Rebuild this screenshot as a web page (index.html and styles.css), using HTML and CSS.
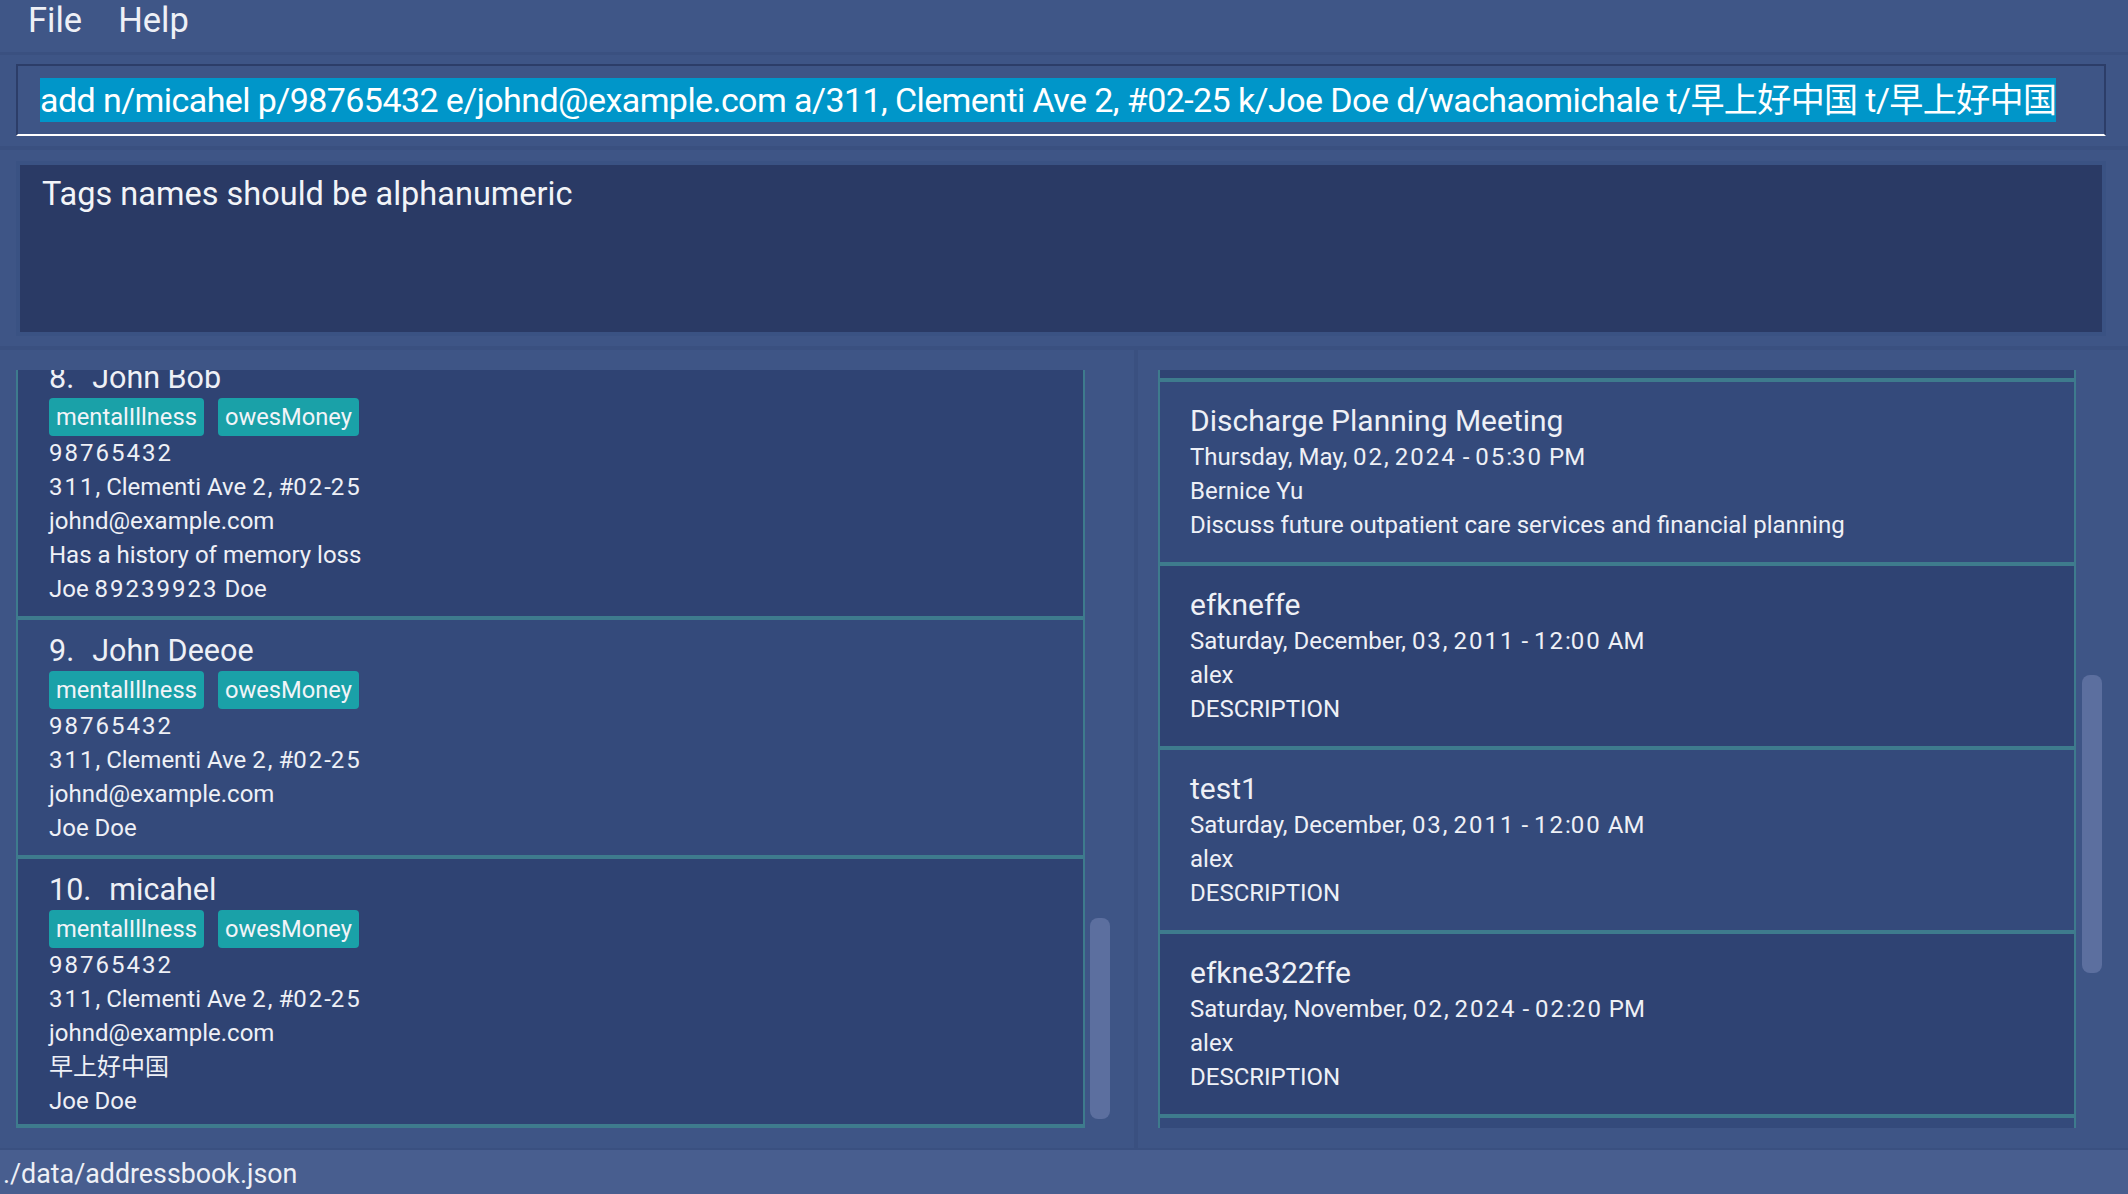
FILE: index.html
```html
<!DOCTYPE html>
<html lang="en">
<head>
<meta charset="utf-8">
<title>AddressBook</title>
<link rel="stylesheet" href="styles.css">
</head>
<body>
<div class="app">
  <div class="menubar">
    <span class="menu-item">File</span>
    <span class="menu-item">Help</span>
  </div>

  <div class="command-pane">
    <div class="command-box">
      <span class="command-text">add n/micahel p/98765432 e/johnd@example.com a/311, Clementi Ave 2, #02-25 k/Joe Doe d/wachaomichale t/早上好中国 t/早上好中国</span>
    </div>
  </div>

  <div class="result-pane">
    <div class="result-box">Tags names should be alphanumeric</div>
  </div>

  <div class="main">
    <div class="panel panel-left">
      <div class="viewport viewport-left">
        <div class="list" style="margin-top:-23px">
          <div class="person odd">
            <div class="name"><span class="idx">8.</span>John Bob</div>
            <div class="tags"><span class="tag">mentalIllness</span><span class="tag">owesMoney</span></div>
            <div class="line"><span class="num">98765432</span></div>
            <div class="line"><span class="num">311</span>, Clementi Ave <span class="num">2</span>, #<span class="num">02</span>-<span class="num">25</span></div>
            <div class="line">johnd@example.com</div>
            <div class="line">Has a history of memory loss</div>
            <div class="line">Joe <span class="num">89239923</span> Doe</div>
          </div>
          <div class="person even">
            <div class="name"><span class="idx">9.</span>John Deeoe</div>
            <div class="tags"><span class="tag">mentalIllness</span><span class="tag">owesMoney</span></div>
            <div class="line"><span class="num">98765432</span></div>
            <div class="line"><span class="num">311</span>, Clementi Ave <span class="num">2</span>, #<span class="num">02</span>-<span class="num">25</span></div>
            <div class="line">johnd@example.com</div>
            <div class="line">Joe Doe</div>
          </div>
          <div class="person odd last">
            <div class="name"><span class="idx">10.</span>micahel</div>
            <div class="tags"><span class="tag">mentalIllness</span><span class="tag">owesMoney</span></div>
            <div class="line"><span class="num">98765432</span></div>
            <div class="line"><span class="num">311</span>, Clementi Ave <span class="num">2</span>, #<span class="num">02</span>-<span class="num">25</span></div>
            <div class="line">johnd@example.com</div>
            <div class="line">早上好中国</div>
            <div class="line">Joe Doe</div>
          </div>
        </div>
      </div>
      <div class="track track-left">
        <div class="thumb" style="margin-top:548px;height:201px"></div>
      </div>
    </div>

    <div class="divider"></div>

    <div class="panel panel-right">
      <div class="viewport viewport-right">
        <div class="list" style="margin-top:-172px">
          <div class="event odd">
            <div class="title">&nbsp;</div>
            <div class="line">&nbsp;</div>
            <div class="line">&nbsp;</div>
            <div class="line">&nbsp;</div>
          </div>
          <div class="event even">
            <div class="title">Discharge Planning Meeting</div>
            <div class="line">Thursday, May, <span class="num">02</span>, <span class="num">2024</span> - <span class="num">05</span>:<span class="num">30</span> PM</div>
            <div class="line">Bernice Yu</div>
            <div class="line">Discuss future outpatient care services and financial planning</div>
          </div>
          <div class="event odd">
            <div class="title">efkneffe</div>
            <div class="line">Saturday, December, <span class="num">03</span>, <span class="num">2011</span> - <span class="num">12</span>:<span class="num">00</span> AM</div>
            <div class="line">alex</div>
            <div class="line">DESCRIPTION</div>
          </div>
          <div class="event even">
            <div class="title">test1</div>
            <div class="line">Saturday, December, <span class="num">03</span>, <span class="num">2011</span> - <span class="num">12</span>:<span class="num">00</span> AM</div>
            <div class="line">alex</div>
            <div class="line">DESCRIPTION</div>
          </div>
          <div class="event odd">
            <div class="title">efkne322ffe</div>
            <div class="line">Saturday, November, <span class="num">02</span>, <span class="num">2024</span> - <span class="num">02</span>:<span class="num">20</span> PM</div>
            <div class="line">alex</div>
            <div class="line">DESCRIPTION</div>
          </div>
          <div class="event even">
            <div class="title">&nbsp;</div>
            <div class="line">&nbsp;</div>
            <div class="line">&nbsp;</div>
            <div class="line">&nbsp;</div>
          </div>
        </div>
      </div>
      <div class="track track-right">
        <div class="thumb" style="margin-top:305px;height:298px"></div>
      </div>
    </div>
  </div>

  <div class="statusbar">./data/addressbook.json</div>
</div>
</body>
</html>
```

FILE: styles.css
```css
* {
  box-sizing: border-box;
}

html, body {
  margin: 0;
  padding: 0;
}

body {
  width: 2128px;
  height: 1194px;
  overflow: hidden;
  background: #3e5586;
  font-family: Roboto, "Noto Sans CJK SC", sans-serif;
  color: #eef0f6;
}

.app {
  display: flex;
  flex-direction: column;
  width: 2128px;
  height: 1194px;
}

/* menu bar */
.menubar {
  height: 55px;
  flex: none;
  display: flex;
  gap: 36px;
  padding-left: 28px;
  background: #3f5687;
  border-bottom: 3px solid #3a5080;
}

.menu-item {
  font-size: 34.5px;
  line-height: 40px;
}

/* command box */
.command-pane {
  flex: none;
  height: 95px;
  padding: 9px 22px 0 16px;
  border-bottom: 4px solid #3a5080;
}

.command-box {
  height: 72px;
  border: 2px solid #2c3d68;
  border-bottom: 2px solid #ffffff;
  padding: 12px 20px 0 22px;
  white-space: nowrap;
  overflow: hidden;
}

.command-text {
  display: inline-block;
  font-size: 34px;
  line-height: 44px;
  height: 44px;
  letter-spacing: -0.58px;
  background: #0096c9;
  color: #ffffff;
}

/* result display */
.result-pane {
  flex: none;
  height: 200px;
  padding: 11px 22px 0 16px;
  border-bottom: 4px solid #3a5080;
}

.result-box {
  height: 175px;
  border: 4px solid #3a5283;
  background: #2a3a65;
  padding: 9px 22px;
  font-size: 32.5px;
  line-height: 40px;
  color: #f2f4f8;
}

/* main area */
.main {
  flex: none;
  height: 798px;
  display: flex;
}

.panel {
  display: flex;
  padding-top: 20px;
}

.panel-left {
  width: 1134px;
  padding-left: 16px;
}

.panel-right {
  width: 990px;
  padding-left: 20px;
}

.divider {
  width: 4px;
  background: #3a5080;
}

.viewport {
  height: 758px;
  overflow: hidden;
  flex: none;
}

.viewport-left {
  width: 1069px;
}

.viewport-right {
  width: 918px;
}

.track {
  flex: none;
  height: 758px;
}

.track-left {
  width: 49px;
  padding-left: 5px;
}

.track-right {
  width: 52px;
  padding-left: 6px;
}

.thumb {
  width: 20px;
  border-radius: 8px;
  background: #5c6f9f;
}

.list {
  display: flex;
  flex-direction: column;
}

.odd {
  background: #2f4373;
}

.even {
  background: #344a7b;
}

.num {
  letter-spacing: 2px;
}

/* person cards */
.person {
  border-left: 2px solid #3e7b8d;
  border-right: 2px solid #3e7b8d;
  border-bottom: 4px solid #3e7b8d;
  padding: 11px 20px 10px 31px;
}

.person.last {
  padding-bottom: 6px;
}

.name {
  font-size: 30.5px;
  line-height: 40px;
  height: 40px;
  white-space: nowrap;
}

.idx {
  margin-right: 18px;
}

.tags {
  display: flex;
  gap: 14px;
  height: 38px;
}

.tag {
  background: #1aa1a8;
  border-radius: 4px;
  padding: 0 7px;
  font-size: 23.7px;
  line-height: 38px;
  color: #f2f4f8;
}

.line {
  font-size: 24px;
  line-height: 34px;
  height: 34px;
  white-space: nowrap;
}

/* event cards */
.event {
  border-left: 2px solid #3e7b8d;
  border-right: 2px solid #3e7b8d;
  border-bottom: 4px solid #3e7b8d;
  padding: 20px 20px 20px 30px;
}

.title {
  font-size: 30px;
  line-height: 38px;
  height: 38px;
  white-space: nowrap;
}

/* status bar */
.statusbar {
  flex: none;
  height: 46px;
  background: #485e8f;
  border-top: 2px solid #3a5080;
  padding-left: 3px;
  padding-top: 4px;
  font-size: 26.8px;
  line-height: 40px;
}
```
